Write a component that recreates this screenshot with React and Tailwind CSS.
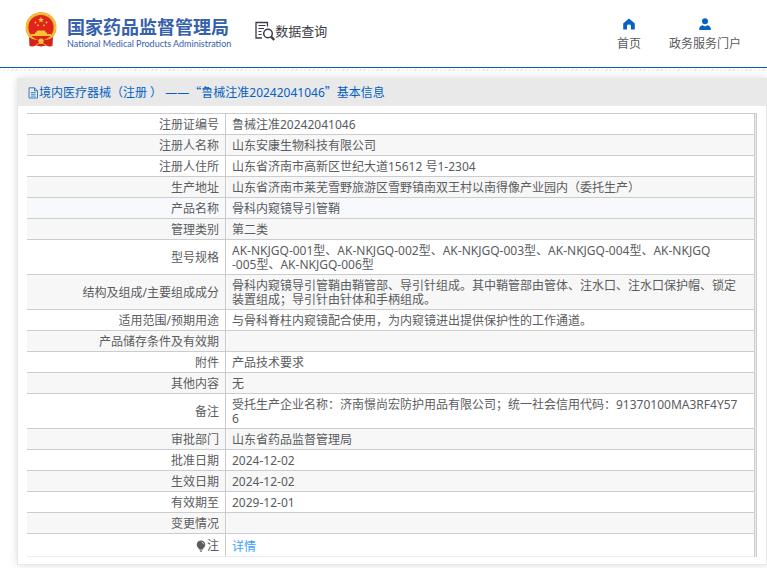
const rows = [
  { label: '注册证编号', value: '鲁械注准20242041046' },
  { label: '注册人名称', value: '山东安康生物科技有限公司' },
  { label: '注册人住所', value: '山东省济南市高新区世纪大道15612 号1-2304' },
  { label: '生产地址', value: '山东省济南市莱芜雪野旅游区雪野镇南双王村以南得像产业园内（委托生产）' },
  { label: '产品名称', value: '骨科内窥镜导引管鞘', active: true },
  { label: '管理类别', value: '第二类' },
  { label: '型号规格', value: 'AK-NKJGQ-001型、AK-NKJGQ-002型、AK-NKJGQ-003型、AK-NKJGQ-004型、AK-NKJGQ\n-005型、AK-NKJGQ-006型' },
  { label: '结构及组成/主要组成成分', value: '骨科内窥镜导引管鞘由鞘管部、导引针组成。其中鞘管部由管体、注水口、注水口保护帽、锁定\n装置组成；导引针由针体和手柄组成。' },
  { label: '适用范围/预期用途', value: '与骨科脊柱内窥镜配合使用，为内窥镜进出提供保护性的工作通道。' },
  { label: '产品储存条件及有效期', value: '' },
  { label: '附件', value: '产品技术要求' },
  { label: '其他内容', value: '无' },
  { label: '备注', value: '受托生产企业名称：济南憬尚宏防护用品有限公司；统一社会信用代码：91370100MA3RF4Y57\n6' },
  { label: '审批部门', value: '山东省药品监督管理局' },
  { label: '批准日期', value: '2024-12-02' },
  { label: '生效日期', value: '2024-12-02' },
  { label: '有效期至', value: '2029-12-01' },
  { label: '变更情况', value: '' },
];

const Emblem = () => (
  <svg viewBox="0 0 32 35" className="w-8 h-[35px] shrink-0" aria-hidden="true">
    <circle cx="16" cy="15.5" r="15.5" fill="#efb22e" />
    <circle cx="16" cy="15.5" r="14.2" fill="none" stroke="#f8d35c" strokeWidth="1" strokeDasharray="2 1" />
    <circle cx="16" cy="15.5" r="12.6" fill="#e0241b" />
    <path d="M16 5 l0.8 2 2.1 0.1 -1.7 1.3 0.6 2.1 -1.8 -1.2 -1.8 1.2 0.6 -2.1 -1.7 -1.3 2.1 -0.1z" fill="#fbd43c" />
    <circle cx="10.5" cy="10.5" r="0.9" fill="#fbd43c" />
    <circle cx="21.5" cy="10.5" r="0.9" fill="#fbd43c" />
    <circle cx="13" cy="13.3" r="0.9" fill="#fbd43c" />
    <circle cx="19" cy="13.3" r="0.9" fill="#fbd43c" />
    <path d="M11.5 19.5 L12.5 18.5 H19.5 L20.5 19.5 V20.5 H22 V22 H26 V24 H6 V22 H10 V20.5 H11.5 Z" fill="#f7c436" />
    <path d="M4 25 Q8 28.5 12.5 28 L16 30 L19.5 28 Q24 28.5 28 25 L27.5 34 Q24 35 21.5 33.5 L16 34.5 L10.5 33.5 Q8 35 4.5 34 Z" fill="#d3231b" />
    <circle cx="16" cy="29" r="2.6" fill="#f5c33a" />
    <path d="M11 33 Q16 29.5 21 33" stroke="#f0b429" strokeWidth="1" fill="none" />
  </svg>
);

const SearchDocIcon = () => (
  <svg viewBox="0 0 20 20" className="w-5 h-5 shrink-0" fill="none" stroke="#3d3b4d" aria-hidden="true">
    <path d="M12.5 5.5 V1.5 H1 V17 H7" strokeWidth="1.3" />
    <path d="M3.5 4.5 H10.5 M3.5 7.5 H9 M3.5 10.5 H6.5 M3.5 13.5 H6.5" strokeWidth="1.2" />
    <circle cx="13" cy="12.5" r="4.3" strokeWidth="1.5" />
    <path d="M16 15.7 L19.3 19" strokeWidth="2.4" />
  </svg>
);

const HomeIcon = () => (
  <svg viewBox="0 0 12 12" className="w-3 h-3" fill="#0561c2" aria-hidden="true">
    <path d="M6 0.5 L11.6 5.2 Q12 5.6 11.8 6.2 V11.5 H8 V8 Q8 6.6 6 6.6 Q4 6.6 4 8 V11.5 H0.2 V6.2 Q0 5.6 0.4 5.2 Z" />
  </svg>
);

const UserIcon = () => (
  <svg viewBox="0 0 12 12" className="w-3 h-3" fill="#0561c2" aria-hidden="true">
    <circle cx="6" cy="3.2" r="3" />
    <path d="M0.2 12 Q0 7.6 3.6 7.2 L6 8.6 L8.4 7.2 Q12 7.6 11.8 12 Z" />
  </svg>
);

const FileIcon = () => (
  <svg viewBox="0 0 11 12" className="w-[11px] h-3 shrink-0" fill="none" stroke="#0561c2" aria-hidden="true">
    <path d="M1 0.8 H6.5 L9.5 3.8 V11 H1 Z M6.5 0.8 V3.8 H9.5" strokeWidth="0.8" />
    <path d="M3 5.5 H7.6 M3 7.3 H7.6 M3 9.1 H7.6" strokeWidth="0.7" />
  </svg>
);

const BulbIcon = () => (
  <svg viewBox="0 0 10 12" className="w-[10px] h-3" aria-hidden="true">
    <path d="M5 0.5 A4.2 4.2 0 0 1 7.6 8 L7 9 H3 L2.4 8 A4.2 4.2 0 0 1 5 0.5 Z" fill="#5a5c60" />
    <path d="M3.4 9.8 H6.6 M4 11.2 H6" stroke="#5a5c60" strokeWidth="1" />
    <path d="M5.6 2 Q7.4 2.4 7.6 4.2" stroke="#fff" strokeWidth="0.7" fill="none" />
  </svg>
);

const navLinks = [
  { label: '首页', icon: HomeIcon },
  { label: '政务服务门户', icon: UserIcon },
];

const Header = () => (
  <header>
    <div className="flex items-start justify-between h-[67px] pl-[25px] pr-[26px]">
      <div className="flex items-start pt-3">
        <a href="#" className="flex items-start gap-[10px] text-[#3560ad]">
          <Emblem />
          <span className="flex flex-col pt-1">
            <span className="text-[18px] leading-[20px] font-bold font-['Noto_Sans_CJK_SC',sans-serif]">国家药品监督管理局</span>
            <span className="text-[9px] leading-[16px] font-['Lato',sans-serif]">National Medical Products Administration</span>
          </span>
        </a>
        <a href="#" className="flex items-center ml-6 pt-[9px] text-[13px] leading-[20px] text-[#3c3c44]">
          <SearchDocIcon />
          数据查询
        </a>
      </div>
      <nav className="flex gap-7 pt-[18px]">
        {navLinks.map((item) => {
          const Icon = item.icon;
          return (
            <a key={item.label} href="#" className="flex flex-col items-center gap-[6px] leading-[16px] text-[#5a5c60]">
              <Icon />
              {item.label}
            </a>
          );
        })}
      </nav>
    </div>
    <div className="h-px bg-[#0b5cb0]" />
    <div className="h-[2px] mt-px bg-[repeating-linear-gradient(135deg,#e6e6e6_0,#e6e6e6_1px,#fff_1px,#fff_3px)]" />
  </header>
);

const App = () => (
  <div className="min-h-screen bg-white text-[12px] leading-[14px] text-[#5a5c60] font-['Noto_Sans','Noto_Sans_CJK_SC',sans-serif]" lang="zh-CN">
    <Header />
    <main className="pl-[17px] pt-[7px] pb-[3px]">
      <section className="border border-[#e8e8e8] bg-white shadow-[0_0_8px_rgba(0,0,0,0.14)]">
        <h1 className="flex items-center h-[27px] pl-[10px] bg-[#e9e9e9] text-[#0561c2] whitespace-pre">
          <FileIcon />
          <span>
            境内医疗器械（注册 ） ——<span className="font-['Noto_Sans_CJK_SC',sans-serif]">“</span>鲁械注准20242041046<span className="font-['Noto_Sans_CJK_SC',sans-serif]">”</span>基本信息
          </span>
        </h1>
        <div className="pt-[7px] pb-[7px] pl-[9px] pr-[9px]">
          <div className="border-t border-r border-[#ccc] bg-[#ebebf3] pr-px">
            <table className="w-full border-r border-[#ccc] border-separate border-spacing-0 bg-white">
              <tbody>
                {rows.map((row) => (
                  <tr key={row.label} className={row.active ? 'bg-[#f8f9fc]' : 'even:bg-[#f7f7f7]'}>
                    <th scope="row" className="w-[199px] h-[21px] px-[6px] pt-1 pb-[2px] border-b border-r border-[#ccc] text-right font-normal">{row.label}</th>
                    <td className="px-[6px] pt-1 pb-[2px] border-b border-[#ccc] whitespace-pre-line">{row.value}</td>
                  </tr>
                ))}
                <tr>
                  <th scope="row" className="h-[23px] px-[6px] pt-[2px] border-b border-b-[#ebebf3] border-r border-r-[#ccc] font-normal">
                    <span className="flex items-center justify-end gap-px">
                      <BulbIcon />注
                    </span>
                  </th>
                  <td className="px-[6px] pt-1 border-b border-[#ebebf3]">
                    <a href="#" className="text-[#409eff]">详情</a>
                  </td>
                </tr>
              </tbody>
            </table>
          </div>
        </div>
      </section>
    </main>
  </div>
);

export default App;
